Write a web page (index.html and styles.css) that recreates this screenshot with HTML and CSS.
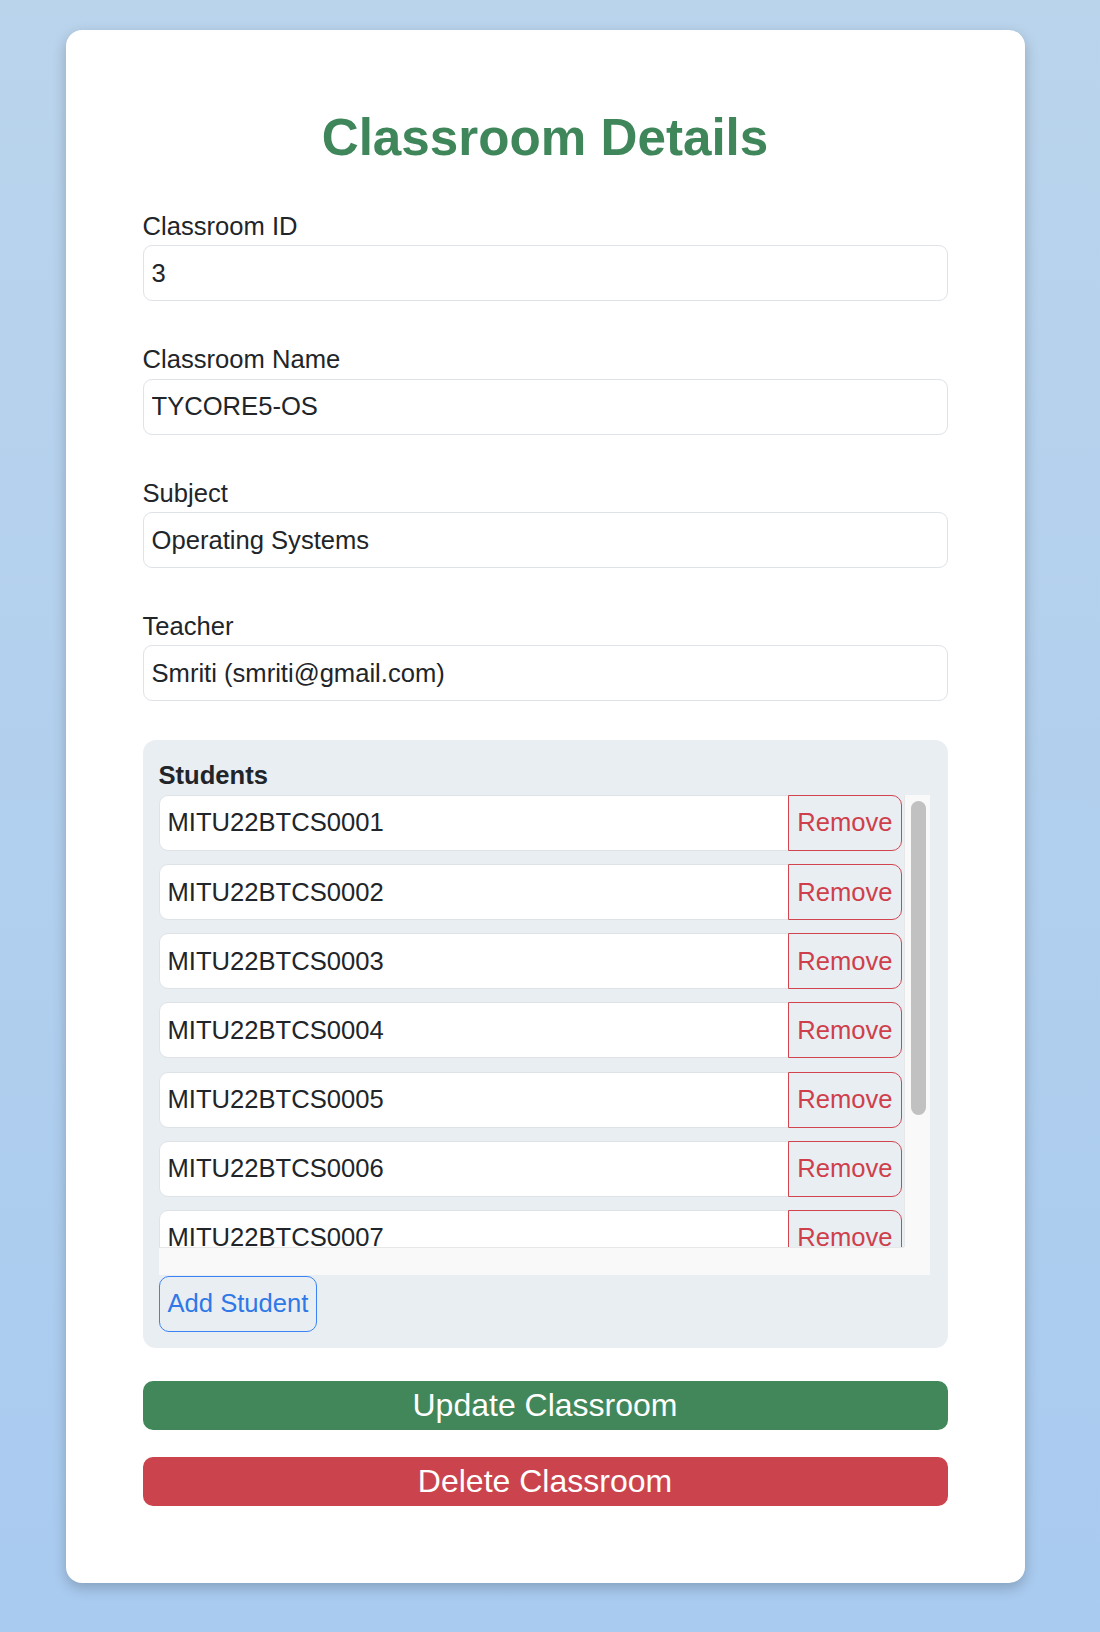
FILE: index.html
```html
<!DOCTYPE html>
<html lang="en">
<head>
<meta charset="utf-8">
<title>Classroom Details</title>
<link rel="stylesheet" href="styles.css">
</head>
<body>
<div class="card">
  <h1 class="title">Classroom Details</h1>

  <div class="field">
    <label class="label">Classroom ID</label>
    <input class="control" type="text" value="3" readonly>
  </div>
  <div class="field">
    <label class="label">Classroom Name</label>
    <input class="control" type="text" value="TYCORE5-OS">
  </div>
  <div class="field">
    <label class="label">Subject</label>
    <input class="control" type="text" value="Operating Systems">
  </div>
  <div class="field">
    <label class="label">Teacher</label>
    <input class="control" type="text" value="Smriti (smriti@gmail.com)">
  </div>

  <div class="students">
    <div class="students-label">Students</div>
    <div class="student-list">
      <div class="list-viewport">
        <div class="student-row"><input class="control row-input" type="text" value="MITU22BTCS0001"><button class="btn-remove">Remove</button></div>
        <div class="student-row"><input class="control row-input" type="text" value="MITU22BTCS0002"><button class="btn-remove">Remove</button></div>
        <div class="student-row"><input class="control row-input" type="text" value="MITU22BTCS0003"><button class="btn-remove">Remove</button></div>
        <div class="student-row"><input class="control row-input" type="text" value="MITU22BTCS0004"><button class="btn-remove">Remove</button></div>
        <div class="student-row"><input class="control row-input" type="text" value="MITU22BTCS0005"><button class="btn-remove">Remove</button></div>
        <div class="student-row"><input class="control row-input" type="text" value="MITU22BTCS0006"><button class="btn-remove">Remove</button></div>
        <div class="student-row"><input class="control row-input" type="text" value="MITU22BTCS0007"><button class="btn-remove">Remove</button></div>
        <div class="student-row"><input class="control row-input" type="text" value="MITU22BTCS0008"><button class="btn-remove">Remove</button></div>
        <div class="student-row"><input class="control row-input" type="text" value="MITU22BTCS0009"><button class="btn-remove">Remove</button></div>
      </div>
      <div class="vscroll"><div class="vthumb"></div></div>
      <div class="hscroll"></div>
      <div class="scroll-corner"></div>
    </div>
    <button class="btn-add">Add Student</button>
  </div>

  <button class="btn-wide btn-update">Update Classroom</button>
  <button class="btn-wide btn-delete">Delete Classroom</button>
</div>
</body>
</html>
```

FILE: styles.css
```css
html, body {
  margin: 0;
}

body {
  min-height: 1632px;
  box-sizing: border-box;
  padding: 30px 10px 50px 0;
  background: linear-gradient(180deg, #bad4ec 0%, #a9cbf0 100%);
  font-family: "Liberation Sans", Arial, Helvetica, sans-serif;
  color: #212529;
}

.card {
  width: 959px;
  margin: 0 auto;
  box-sizing: border-box;
  padding: 77px;
  background: #ffffff;
  border-radius: 16px;
  box-shadow: 0 5px 14px rgba(0, 0, 0, 0.22);
}

.title {
  margin: 0 0 38.4px;
  text-align: center;
  font-size: 51.2px;
  line-height: 1.2;
  font-weight: bold;
  color: #3f865a;
}

.field {
  margin-bottom: 39px;
}

.label {
  display: block;
  font-size: 25.6px;
  line-height: 38.4px;
}

.control {
  display: block;
  width: 100%;
  height: 56px;
  box-sizing: border-box;
  margin: 0;
  padding: 0 8px;
  border: 1px solid #dfe2e6;
  border-radius: 9px;
  background: #ffffff;
  font-family: inherit;
  font-size: 25.6px;
  color: #212529;
  outline: none;
}

.students {
  background: #e9eef3;
  border-radius: 13px;
  padding: 16px;
}

.students-label {
  font-size: 25.6px;
  line-height: 38.4px;
  font-weight: bold;
}

.student-list {
  display: grid;
  grid-template-columns: 1fr 26px;
  grid-template-rows: 452px 28px;
  margin-right: 2px;
}

.list-viewport {
  overflow: hidden;
  min-width: 0;
}

.vscroll {
  box-sizing: border-box;
  padding: 6px 4px 0 6px;
  background: #f9f9f9;
  border-left: 1px solid #e7e7e7;
}

.vthumb {
  height: 314px;
  background: #c1c1c1;
  border-radius: 8px;
}

.hscroll {
  background: #f9f9f9;
  border-top: 1px solid #e7e7e7;
}

.scroll-corner {
  background: #f9f9f9;
}

.student-row {
  display: flex;
  height: 56px;
  margin: 0 2px 13.2px 0;
}

.row-input {
  flex: 1;
  min-width: 0;
  border-radius: 9px 0 0 9px;
}

.btn-remove {
  flex: none;
  height: 56px;
  margin: 0 0 0 -1px;
  padding: 0 8px;
  border: 1px solid #d2454f;
  border-radius: 0 10px 10px 0;
  background: transparent;
  font-family: inherit;
  font-size: 25.6px;
  color: #cf3f4b;
}

.btn-add {
  display: block;
  height: 56px;
  margin: 1px 0 0;
  padding: 0 8px;
  border: 1px solid #3b82f6;
  border-radius: 10px;
  background: transparent;
  font-family: inherit;
  font-size: 25.6px;
  color: #2f78e6;
}

.btn-wide {
  display: block;
  width: 100%;
  height: 49px;
  padding: 0;
  border: none;
  border-radius: 10px;
  font-family: inherit;
  font-size: 32px;
  color: #ffffff;
}

.btn-update {
  margin-top: 33px;
  background: #41875a;
}

.btn-delete {
  margin-top: 27px;
  background: #cb444d;
}
```
